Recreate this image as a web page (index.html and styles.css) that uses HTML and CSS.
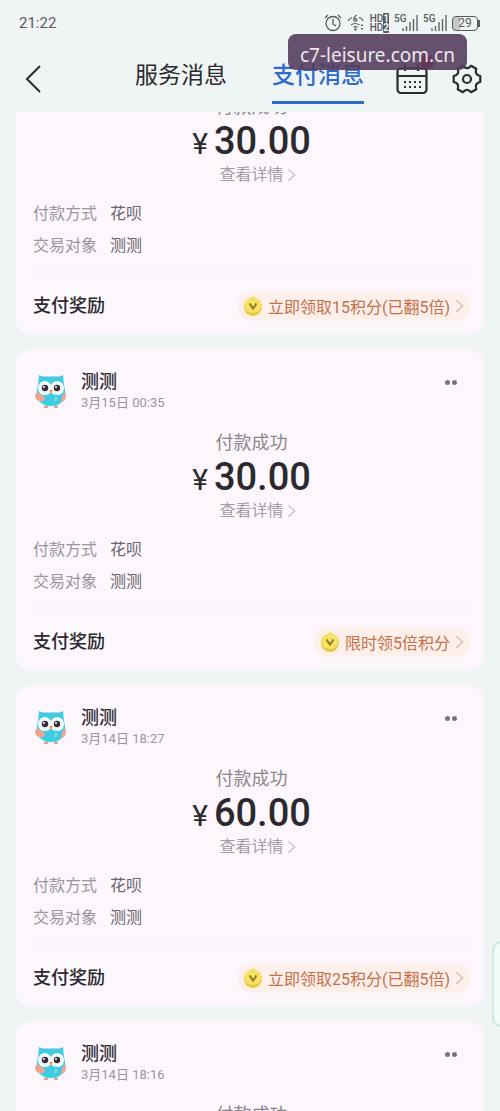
FILE: index.html
```html
<!DOCTYPE html>
<html lang="zh-CN">
<head>
<meta charset="utf-8">
<meta name="viewport" content="width=device-width, initial-scale=1">
<title>支付消息</title>
<link rel="stylesheet" href="styles.css">
</head>
<body>
<svg class="defs" aria-hidden="true">
  <symbol id="chevron" viewBox="0 0 10 16"><path d="M1.500 1.500 8.500 8l-7 6.500" fill="none" stroke="currentColor" stroke-width="1.500"/></symbol>
  <symbol id="signal" viewBox="0 0 24 18"><path d="M9 17v-3M12.500 17v-5M16 17V8M19.500 17V5M23 17V1" stroke="currentColor" stroke-width="1.300"/></symbol>
  <symbol id="coin" viewBox="0 0 20 20">
    <circle cx="10" cy="11" r="9" fill="#e9c63e"/>
    <path d="M10 0 17 4.500Q19 6 18.500 9.500 18 16.500 10 17 2 16.500 1.500 9.500 1 6 3 4.500Z" fill="#f5e267"/>
    <path d="m6.500 7.500 3.500 5 3.500-5" fill="none" stroke="#8b7a22" stroke-width="2"/>
  </symbol>
  <symbol id="owl" viewBox="0 0 32 34">
    <path d="M11 30v3M21 30v3M9 33h4M19 33h4" stroke="#e8a090" stroke-width="2"/>
    <path d="M4 1Q7 3 11 2.500H21Q25 3 28 1L29 11Q32 22 28 27 24 32 16 32 8 32 4 27 0 22 3 11Z" fill="#3fcbe4"/>
    <path d="M2 18Q-1 22 1 25 3 28 8 27L11 24ZM30 18Q32 23 29 27L26 28 27 22Z" fill="#eea58d"/>
    <path d="M3 15Q3 8 9 7 14 7 16 11 18 7 23 7 29 8 29 15 28 21 22 21 18 21 16 18 14 21 10 21 4 21 3 15Z" fill="#f4fbfb"/>
    <path d="m14 16 2 4 2-4Z" fill="#e9a04f"/>
    <circle cx="10" cy="14" r="3.200" fill="#372c3b"/><circle cx="22" cy="14" r="3.200" fill="#372c3b"/>
    <circle cx="9" cy="13" r="1" fill="#fff"/><circle cx="21" cy="13" r="1" fill="#fff"/>
    <path d="M21 23v4" stroke="#c9f5f8"/>
  </symbol>
</svg>

<header class="top">
  <div class="status">
    <span class="time">21:22</span>
    <div class="indicators">
      <svg class="alarm" viewBox="0 0 18 18" fill="none" stroke="currentColor" stroke-width="1.300"><circle cx="9" cy="9.500" r="7"/><path d="M9 5v5l3 2M1 4l3-3M14 1l3 3"/></svg>
      <svg class="wifi" viewBox="0 0 18 18" fill="none" stroke="currentColor" stroke-width="1.200"><path d="M1 7q2-3 4-3.500M12 3.500q3 .5 4 3.500M9.500 1Q6 4 7 6.500q2 1.500 3 0Q10 4 7 5M4 11q4-3 8.500 0M6.500 13.200q2-1.200 4 0"/><circle cx="8.500" cy="15.500" r=".6"/><path d="m13.500 12 1.500-2 1.500 2ZM13.500 14l1.500 2 1.500-2Z" fill="currentColor" stroke="none"/></svg>
      <span class="hd"><span>HD<b>1</b></span><span>HD<b>2</b></span></span>
      <span class="net"><span class="gen">5G</span><svg class="bars"><use href="#signal"/></svg></span>
      <span class="net"><span class="gen">5G</span><svg class="bars"><use href="#signal"/></svg></span>
      <span class="battery">29</span>
    </div>
  </div>
  <nav class="bar">
    <button class="icon-button" aria-label="返回"><svg class="back" viewBox="0 0 16 28"><path d="M15 1 2 14l13 13" fill="none" stroke="currentColor" stroke-width="2"/></svg></button>
    <div class="tabs">
      <a class="tab" href="#service">服务消息</a>
      <a class="tab active" href="#pay">支付消息</a>
    </div>
    <div class="actions">
      <button class="icon-button" aria-label="日历"><svg class="calendar" viewBox="0 0 32 32" fill="none" stroke="currentColor" stroke-width="2.200"><rect x="1.500" y="5" width="29" height="25" rx="3.500"/><path d="M2 13h28M9 1v7M22 1v7"/><path d="M8 19h17M8 24h17" stroke-dasharray="2 3"/></svg><span class="dot"></span></button>
      <button class="icon-button" aria-label="设置"><svg class="gear" viewBox="0 0 30 30" fill="none" stroke="currentColor" stroke-width="2.200" stroke-linejoin="round"><path d="M10.900 1.800Q15 6.500 19.100 1.800L24.300 4.800Q22.300 10.800 28.300 12V18Q22.300 19.200 24.300 25.200L19.100 28.200Q15 23.500 10.900 28.200L5.700 25.200Q7.700 19.200 1.700 18V12Q7.700 10.800 5.700 4.800Z"/><circle cx="15" cy="15" r="4"/></svg></button>
    </div>
  </nav>
  <div class="domain">c7-leisure.com.cn</div>
</header>

<main class="feed">
  <div class="list">
    <article class="card continued">
      <div class="summary"><p class="result">付款成功</p><p class="amount"><span class="yen">¥</span>30.00</p><a class="detail" href="#detail">查看详情<svg class="arrow"><use href="#chevron"/></svg></a></div>
      <dl class="facts"><dt>付款方式</dt><dd>花呗</dd><dt>交易对象</dt><dd>测测</dd></dl>
      <div class="reward"><h3 class="reward-title">支付奖励</h3><a class="pill" href="#reward"><svg class="coin"><use href="#coin"/></svg>立即领取15积分(已翻5倍)<svg class="arrow"><use href="#chevron"/></svg></a></div>
    </article>
    <article class="card">
      <div class="sender"><svg class="avatar"><use href="#owl"/></svg><div class="who"><h2 class="name">测测</h2><time class="date">3月15日 00:35</time></div><button class="more" aria-label="更多"></button></div>
      <div class="summary"><p class="result">付款成功</p><p class="amount"><span class="yen">¥</span>30.00</p><a class="detail" href="#detail">查看详情<svg class="arrow"><use href="#chevron"/></svg></a></div>
      <dl class="facts"><dt>付款方式</dt><dd>花呗</dd><dt>交易对象</dt><dd>测测</dd></dl>
      <div class="reward"><h3 class="reward-title">支付奖励</h3><a class="pill" href="#reward"><svg class="coin"><use href="#coin"/></svg>限时领5倍积分<svg class="arrow"><use href="#chevron"/></svg></a></div>
    </article>
    <article class="card">
      <div class="sender"><svg class="avatar"><use href="#owl"/></svg><div class="who"><h2 class="name">测测</h2><time class="date">3月14日 18:27</time></div><button class="more" aria-label="更多"></button></div>
      <div class="summary"><p class="result">付款成功</p><p class="amount"><span class="yen">¥</span>60.00</p><a class="detail" href="#detail">查看详情<svg class="arrow"><use href="#chevron"/></svg></a></div>
      <dl class="facts"><dt>付款方式</dt><dd>花呗</dd><dt>交易对象</dt><dd>测测</dd></dl>
      <div class="reward"><h3 class="reward-title">支付奖励</h3><a class="pill" href="#reward"><svg class="coin"><use href="#coin"/></svg>立即领取25积分(已翻5倍)<svg class="arrow"><use href="#chevron"/></svg></a></div>
    </article>
    <article class="card">
      <div class="sender"><svg class="avatar"><use href="#owl"/></svg><div class="who"><h2 class="name">测测</h2><time class="date">3月14日 18:16</time></div><button class="more" aria-label="更多"></button></div>
      <div class="summary"><p class="result">付款成功</p></div>
    </article>
  </div>
</main>
<div class="side-handle"></div>
</body>
</html>
```

FILE: styles.css
```css
* { box-sizing: border-box; }
body {
  margin: 0;
  height: 100vh;
  overflow: hidden;
  display: flex;
  flex-direction: column;
  position: relative;
  background: #eff4f4;
  color: #2b2a2e;
  font-family: Roboto, "Noto Sans CJK SC", sans-serif;
}
h2, h3, p, dl, dd { margin: 0; }
a { color: inherit; text-decoration: none; }
button { border: 0; padding: 0; background: none; color: inherit; font: inherit; }
svg { display: block; flex: none; }
.defs { position: absolute; width: 0; height: 0; }

.top { position: relative; flex: none; }
.status {
  display: flex;
  justify-content: space-between;
  align-items: center;
  height: 46px;
  padding: 0 22px 0 19px;
  color: #5a5a5e;
}
.time { font-size: 15px; }
.indicators { display: flex; align-items: center; gap: 5px; }
.alarm, .wifi { width: 18px; height: 18px; }
.hd { display: flex; flex-direction: column; font-size: 10px; line-height: 9px; font-weight: 500; }
.hd b { background: #5a5a5e; color: #eff4f4; border-radius: 1px; }
.net { position: relative; }
.bars { width: 24px; height: 18px; }
.gen { position: absolute; left: 0; top: 0; font-size: 10px; line-height: 10px; font-weight: 500; }
.battery {
  position: relative;
  width: 26px;
  height: 15px;
  border: 1px solid #5a5a5e;
  border-radius: 4px;
  background: linear-gradient(90deg, #c5c7ca 30%, transparent 30%);
  font-size: 12px;
  line-height: 13px;
  text-align: center;
}
.battery::after { content: ""; position: absolute; right: -3px; top: 3px; width: 2px; height: 7px; background: #5a5a5e; }
.bar { display: flex; align-items: center; height: 66px; padding: 0 18px 0 25px; }
.icon-button { position: relative; }
.back { width: 16px; height: 28px; }
.tabs { display: flex; flex: 1; align-self: flex-start; justify-content: center; gap: 45px; padding-left: 62px; white-space: nowrap; }
.tab { padding: 14px 0 9px; border-bottom: 3px solid transparent; font-size: 23px; line-height: 32px; }
.tab.active { color: #2c6ad0; border-color: #2b6dc4; font-weight: 500; }
.actions { display: flex; align-items: center; gap: 24px; }
.calendar { width: 32px; height: 32px; }
.gear { width: 30px; height: 30px; }
.dot { position: absolute; right: -6px; top: -8px; width: 14px; height: 14px; border-radius: 50%; background: #e3122e; }
.domain {
  position: absolute;
  right: 33px;
  top: 34px;
  padding: 6px 12px 0;
  border-radius: 8px;
  background: rgba(83, 60, 92, .89);
  color: #efe6ee;
  font: 19px/30px "Noto Sans", sans-serif;
}

.feed { flex: 1; min-height: 0; overflow: hidden; }
.list { display: flex; flex-direction: column; gap: 16px; margin-top: -18px; padding: 0 16px; }
.card { padding: 20px 14px 13px 17px; border-radius: 14px; background: #fdf7fd; }
.card.continued { padding-top: 0; }
.card.continued .summary { padding-top: 0; }
.sender { display: flex; align-items: flex-start; gap: 13px; }
.avatar { width: 34px; height: 34px; margin: 4px 0 0 1px; }
.who { flex: 1; }
.name { font-size: 18px; line-height: 24px; font-weight: 500; }
.date { display: block; font-size: 13px; line-height: 18px; color: #98959b; }
.more { display: flex; gap: 2px; padding: 10px 13px 10px 0; }
.more::before, .more::after { content: ""; width: 5px; height: 5px; border-radius: 50%; background: #77757a; }
.summary { display: flex; flex-direction: column; align-items: center; padding-top: 18px; }
.result { font-size: 18px; line-height: 26px; color: #89868c; }
.amount { display: flex; align-items: baseline; gap: 6px; font-size: 38px; line-height: 42px; font-weight: 500; }
.yen { font-size: 30px; font-weight: 400; }
.detail { display: flex; align-items: center; gap: 3px; padding-left: 12px; font-size: 16px; line-height: 20px; color: #a29fa5; }
.arrow { width: 9px; height: 16px; color: #c6c1c8; }
.facts { display: grid; grid-template-columns: auto 1fr; column-gap: 13px; row-gap: 8px; padding: 17px 0 8px; font-size: 16px; line-height: 24px; }
.facts dt { color: #98969b; }
.facts dd { color: #67656a; }
.reward { display: flex; justify-content: space-between; align-items: center; border-top: 7px solid #f8f7fb; padding-top: 18px; }
.reward-title { font-size: 18px; line-height: 28px; font-weight: 500; }
.pill { display: flex; align-items: center; height: 30px; gap: 5px; padding: 0 6px; border-radius: 15px; background: #fdf0ea; color: #c56f4c; font-size: 16px; }
.coin { width: 20px; height: 20px; }
.pill .arrow { color: #d5bdb4; }
.side-handle { position: absolute; right: -10px; top: 941px; width: 18px; height: 86px; border: 2px solid #cfe8dc; border-radius: 9px; background: #f1fbf8; }
```
